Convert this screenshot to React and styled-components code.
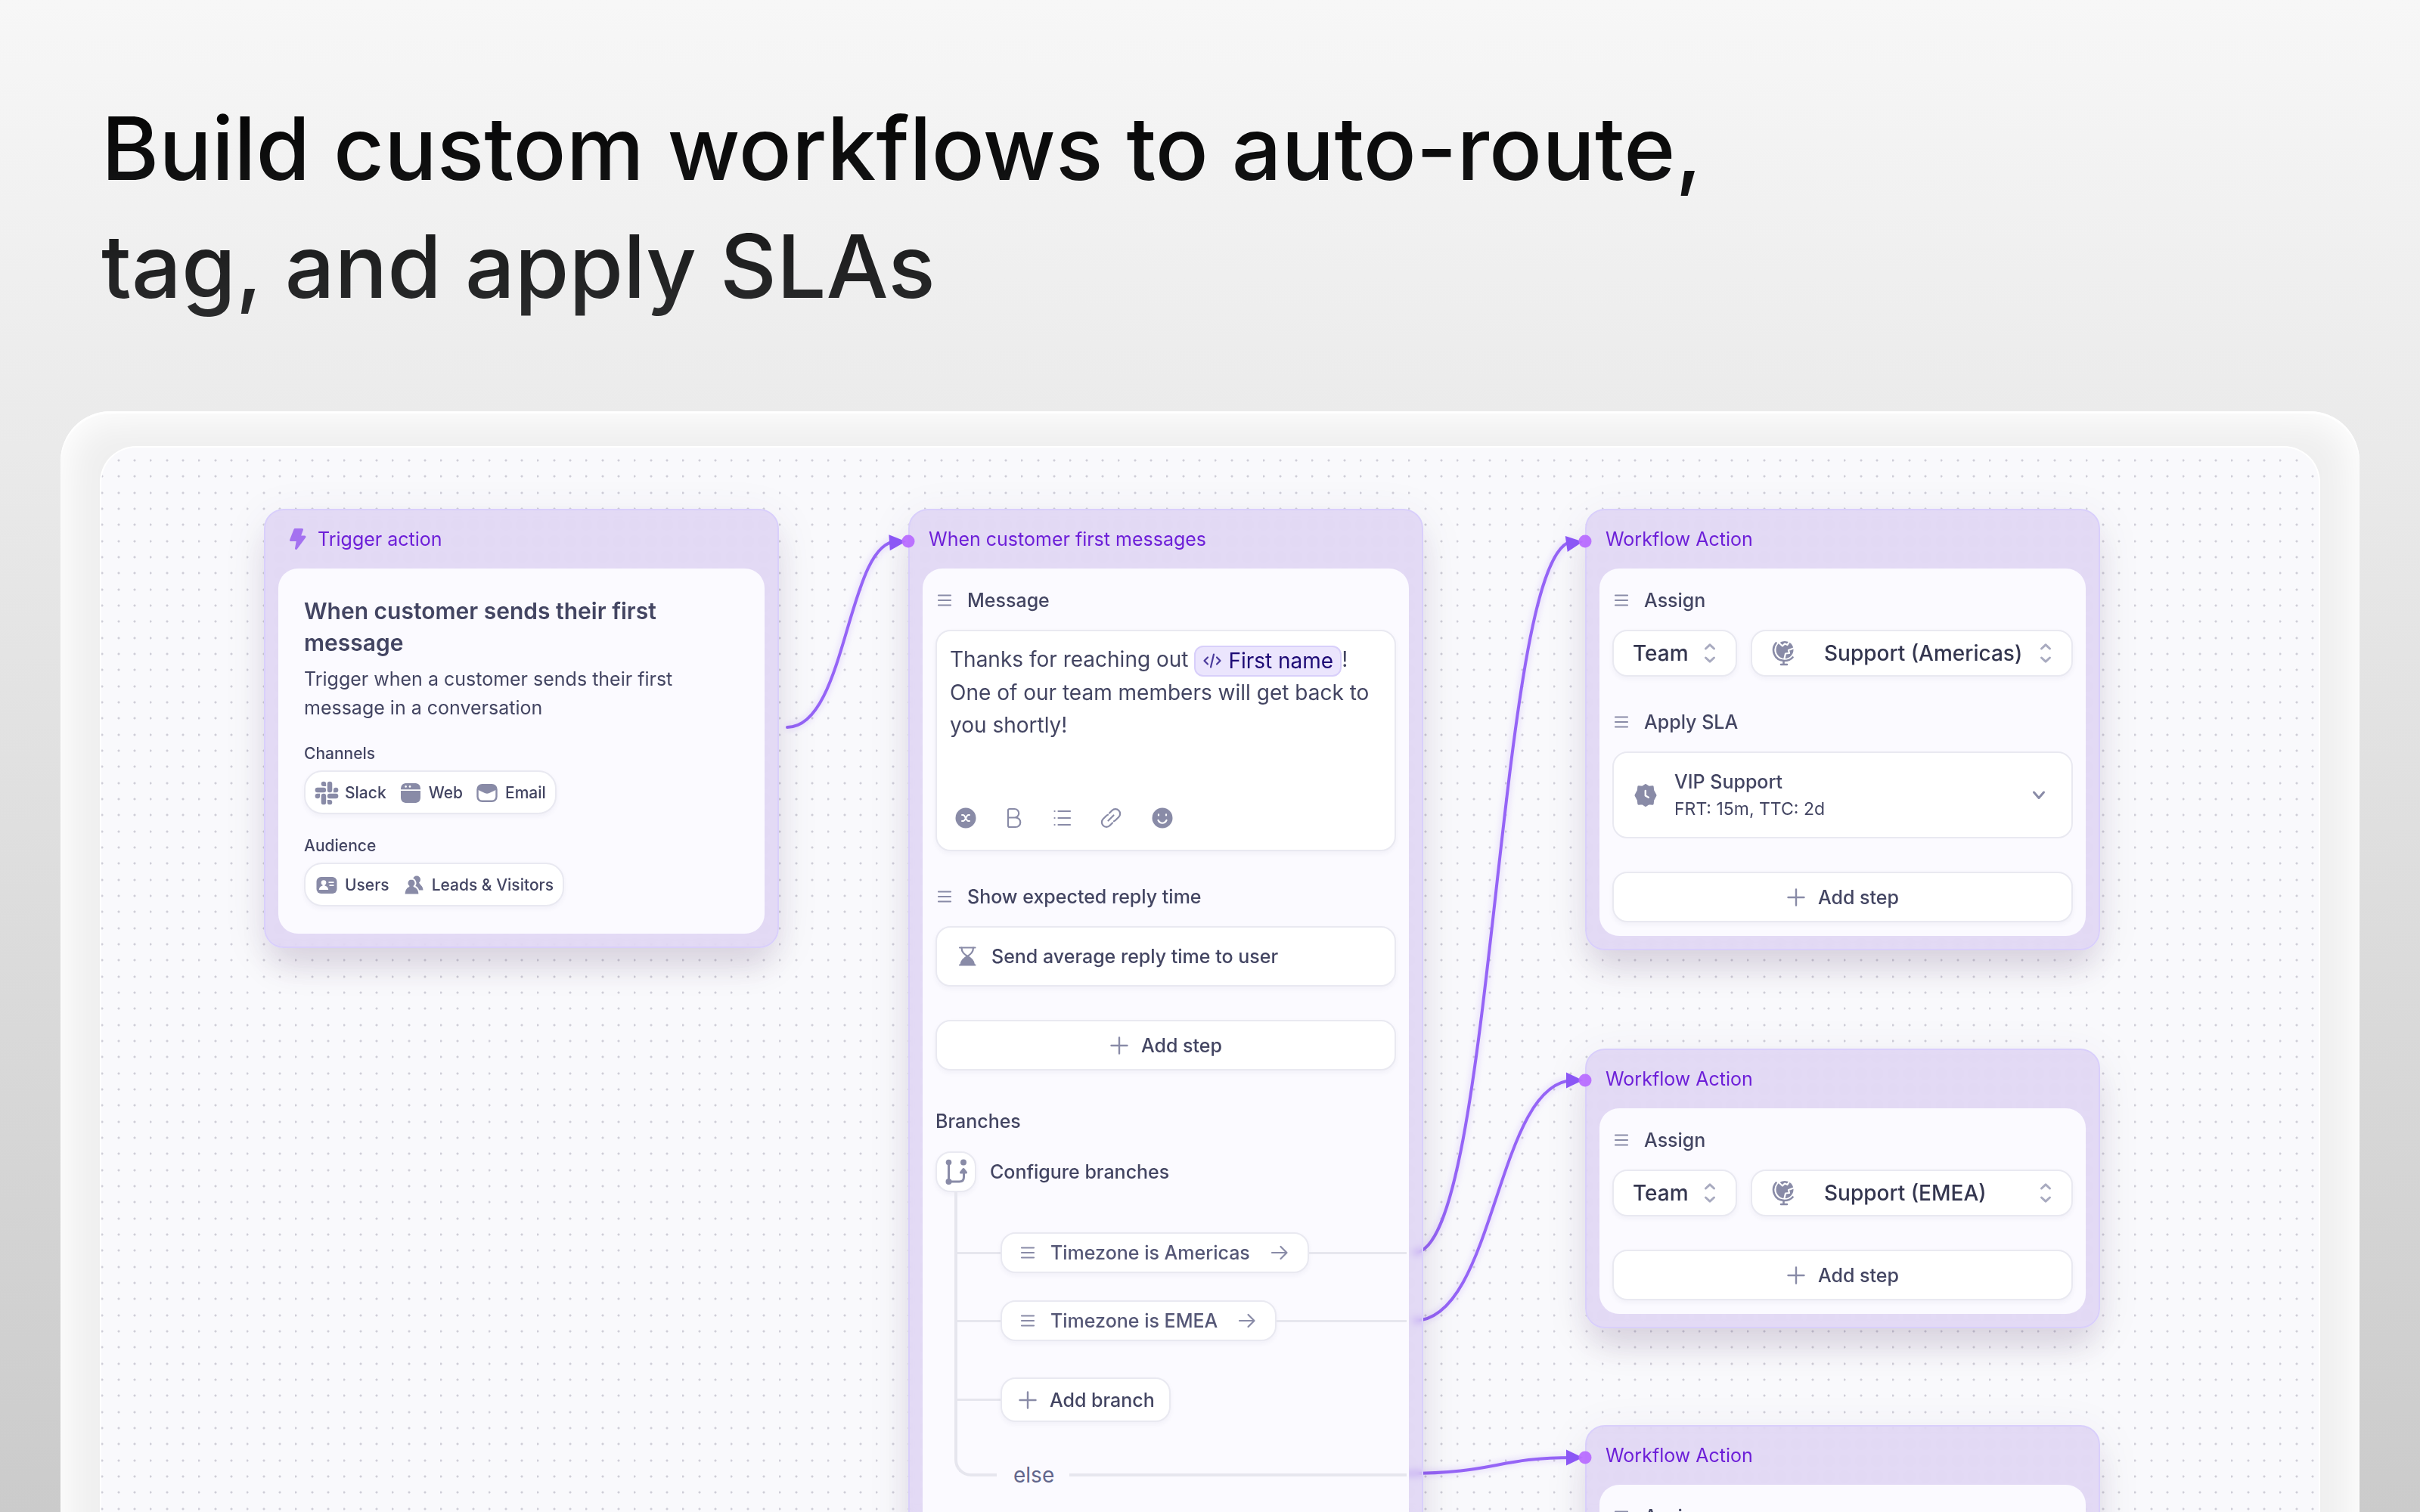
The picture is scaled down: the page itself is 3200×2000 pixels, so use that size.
import React, { useState } from "react";
import styled, { createGlobalStyle } from "styled-components";

const inkColor = "#434562";
const strongColor = "#34364f";
const iconColor = "#898ba7";
const lineColor = "#e6e6ee";
const purpleColor = "#6d1fd8";
const connectorColor = "#9564f6";

// nine dots per 64px tile
const dotPattern = [17, 38, 60]
  .map((y) =>
    [1, 23, 44]
      .map(
        (x) =>
          `radial-gradient(circle at ${x}px ${y}px, #cfced8 1px, transparent 2px)`
      )
      .join(", ")
  )
  .join(", ");

const GlobalStyle = createGlobalStyle`
  * {
    box-sizing: border-box;
  }

  body {
    margin: 0;
    font-family: Inter, "Liberation Sans", sans-serif;
    color: ${inkColor};
    -webkit-font-smoothing: antialiased;
  }

  h1, h2, h3, p {
    margin: 0;
  }

  button, select {
    font-family: inherit;
    color: inherit;
    cursor: pointer;
  }
`;

const Page = styled.main`
  display: flex;
  flex-direction: column;
  height: 100vh;
  overflow: hidden;
  background: linear-gradient(#f7f7f7, #cbcbcb);
`;

const Title = styled.h1`
  max-width: 2400px;
  padding: 118px 134px 114px;
  font-size: 116px;
  line-height: 156px;
  font-weight: 500;
  background: linear-gradient(#000 20%, #2c2d2e 80%);
  background-clip: text;
  color: transparent;
`;

const Frame = styled.section`
  flex: 1;
  display: flex;
  margin: 0 80px -80px;
  padding: 46px 52px 0;
  border-radius: 66px 66px 0 0;
  background: #efefef;
  box-shadow: inset 0 3px 2px #fff, inset 0 0 50px 12px #fff;
`;

const Canvas = styled.div`
  position: relative;
  flex: 1;
  overflow: hidden;
  border: 2px solid #fff;
  border-bottom: none;
  border-radius: 48px 48px 0 0;
  background-color: #f9f9fc;
  background-image: ${dotPattern};
  background-size: 64px 64px;
`;

const Connectors = styled.svg`
  position: absolute;
  top: 0;
  left: 0;
  width: 100%;
  height: 100%;
  filter: drop-shadow(0 0 5px rgba(149, 100, 246, 0.35));
`;

const Ports = styled(Connectors)`
  filter: none;
  pointer-events: none;
`;

const Node = styled.article`
  position: absolute;
  left: ${(props) => props.$x}px;
  top: ${(props) => props.$y}px;
  width: 681px;
  padding: 0 17px 17px;
  border: 2px solid #d9cffb;
  border-radius: 26px;
  background: rgba(211, 197, 240, 0.6);
  backdrop-filter: blur(5px);
  box-shadow: 0 30px 44px -8px rgba(74, 40, 90, 0.15),
    0 12px 60px rgba(74, 60, 110, 0.08);
`;

const NodeHeader = styled.header`
  display: flex;
  align-items: center;
  gap: 14px;
  height: 77px;
  padding: 0 8px 2px;
  line-height: 32px;
  color: ${purpleColor};

  h2 {
    font-size: 25px;
    font-weight: 400;
  }
`;

const NodeBody = styled.div`
  padding: ${(props) => (props.$wide ? "35px 34px 36px" : "18px 17px")};
  border-radius: 26px;
  background: #fbfaff;
`;

const TriggerTitle = styled.h3`
  font-size: 30px;
  line-height: 42px;
  font-weight: 600;
`;

const TriggerText = styled.p`
  margin-top: 8px;
  font-size: 25px;
  line-height: 38px;
`;

const GroupLabel = styled.p`
  margin: 29px 0 9px;
  font-size: 21px;
  line-height: 26px;
  font-weight: 500;
`;

const Surface = `
  border: 2px solid #e9e9f1;
  background: #fff;
  box-shadow: 0 3px 6px rgba(60, 60, 110, 0.05);
`;

const TagGroup = styled.div`
  ${Surface}
  display: flex;
  align-items: center;
  gap: 16px;
  width: fit-content;
  height: 58px;
  padding: 2px 12px 0;
  border-radius: 24px;
`;

const Tag = styled.span`
  display: flex;
  align-items: center;
  gap: 8px;
  font-size: 21px;
  line-height: 26px;
  font-weight: 500;
`;

const StepHeader = styled.h3`
  display: flex;
  align-items: center;
  gap: 18px;
  height: 48px;
  margin-bottom: 15px;
  font-size: 25px;
  font-weight: 500;
`;

const Step = styled.section`
  & + & {
    margin-top: 36px;
  }
`;

const Editor = styled.div`
  ${Surface}
  height: 293px;
  display: flex;
  flex-direction: column;
  justify-content: space-between;
  padding: 16px 17px 28px;
  border-radius: 20px;
`;

const EditorText = styled.div`
  font-size: 28px;
  line-height: 43px;
  outline: none;
`;

const Variable = styled.span`
  display: inline-flex;
  align-items: center;
  gap: 8px;
  height: 41px;
  padding: 0 9px;
  border: 2px solid #d8cffa;
  border-radius: 12px;
  background: #ebe5fd;
  color: #1d0a75;
  line-height: 37px;
  vertical-align: middle;
`;

const Toolbar = styled.div`
  display: flex;
  gap: 36px;
  padding-left: 7px;
`;

const ToolButton = styled.button`
  display: flex;
  padding: 0;
  border: none;
  background: none;
`;

const ReplyBox = styled.div`
  ${Surface}
  display: flex;
  align-items: center;
  gap: 16px;
  height: 80px;
  padding: 0 24px;
  border-radius: 20px;
  font-size: 25px;
  font-weight: 500;
`;

const AddStep = styled.button`
  ${Surface}
  display: flex;
  align-items: center;
  justify-content: center;
  gap: 16px;
  width: 100%;
  height: 67px;
  margin-top: 44px;
  border-radius: 20px;
  font-size: 25px;
  font-weight: 500;
`;

const BranchesTitle = styled.h3`
  margin: 47px 0 20px;
  font-size: 25px;
  line-height: 40px;
  font-weight: 500;
`;

const ConfigureRow = styled.div`
  display: flex;
  align-items: center;
  gap: 18px;
  font-size: 25px;
  font-weight: 500;
`;

const BranchIcon = styled.span`
  ${Surface}
  display: flex;
  align-items: center;
  justify-content: center;
  width: 54px;
  height: 54px;
  border-radius: 20px;
`;

const BranchTree = styled.div`
  position: relative;
  display: flex;
  flex-direction: column;
  margin: 0 -14px 70px 25px;
  padding: 53px 0 68px;
  border: solid ${lineColor};
  border-width: 0 0 4px 4px;
  border-radius: 0 0 0 22px;
`;

const BranchRow = styled.div`
  display: flex;
  align-items: center;
  margin-bottom: ${(props) => props.$gap}px;
`;

const Stub = styled.span`
  width: 57px;
  height: 3px;
  background: ${lineColor};
`;

const Wire = styled(Stub)`
  flex: 1;
`;

const BranchButton = styled.button`
  ${Surface}
  display: flex;
  align-items: center;
  gap: ${(props) => (props.$add ? 16 : 18)}px;
  height: ${(props) => (props.$add ? 59 : 54)}px;
  padding: 0 ${(props) => (props.$add ? "19px 0 21px" : "24px 0 22px")};
  border-radius: 20px;
  font-size: 25px;
  font-weight: 500;
  color: ${(props) => (props.$add ? inkColor : "#555776")};
`;

const ElseLabel = styled.span`
  position: absolute;
  left: 52px;
  bottom: -22px;
  padding: 0 20px 0 22px;
  background: #fbfaff;
  font-size: 28px;
  line-height: 40px;
  color: #62668c;
`;

const SelectRow = styled.div`
  display: flex;
  gap: 18px;
`;

const SelectBox = styled.label`
  ${Surface}
  display: flex;
  flex: ${(props) => (props.$grow ? 1 : "none")};
  width: ${(props) => (props.$grow ? "auto" : "165px")};
  min-width: 0;
  align-items: center;
  gap: 8px;
  height: 62px;
  padding: 0 26px 0 25px;
  border-radius: 20px;

  svg {
    flex: none;
  }
`;

const Select = styled.select`
  appearance: none;
  flex: 1;
  min-width: 0;
  padding: 0 0 0 ${(props) => (props.$inset ? 30 : 0)}px;
  border: none;
  background: transparent;
  font-size: 28px;
  line-height: 40px;
  font-weight: 500;
  color: ${strongColor};
  outline: none;
`;

const SlaButton = styled.button`
  border: 2px solid #e9e9f1;
  background: #fff;
  display: flex;
  align-items: center;
  gap: 22px;
  width: 100%;
  height: 115px;
  padding: 0 34px 0 26px;
  border-radius: 20px;
  text-align: left;
`;

const SlaText = styled.span`
  flex: 1;
  display: flex;
  flex-direction: column;
  font-size: 23px;
  line-height: 36px;

  strong {
    font-size: 25px;
    font-weight: 500;
  }
`;

const Icon = ({ w = 28, h = 28, children, ...rest }) => (
  <svg
    width={w}
    height={h}
    viewBox={`0 0 ${w} ${h}`}
    fill="none"
    stroke={iconColor}
    strokeWidth="2.4"
    strokeLinecap="round"
    strokeLinejoin="round"
    aria-hidden="true"
    {...rest}
  >
    {children}
  </svg>
);

const solid = { fill: iconColor, stroke: "none" };

const BoltIcon = () => (
  <Icon w={30} h={30} fill="#a472f0" stroke="#a472f0" strokeWidth="3">
    <path d="M14 2.500h9.500l-3.500 9.500h7L15.500 27.500l2-11H8.500z" />
  </Icon>
);

const SlackIcon = () => (
  <svg width="32" height="32" viewBox="-0.500 -0.500 25 25" fill={iconColor} aria-hidden="true">
    <path d="M5.042 15.165a2.528 2.528 0 0 1-2.52 2.523A2.528 2.528 0 0 1 0 15.165a2.527 2.527 0 0 1 2.522-2.52h2.52v2.52zM6.313 15.165a2.527 2.527 0 0 1 2.521-2.52 2.527 2.527 0 0 1 2.521 2.52v6.313A2.528 2.528 0 0 1 8.834 24a2.528 2.528 0 0 1-2.521-2.522v-6.313zM8.834 5.042a2.528 2.528 0 0 1-2.521-2.52A2.528 2.528 0 0 1 8.834 0a2.528 2.528 0 0 1 2.521 2.522v2.52H8.834zM8.834 6.313a2.528 2.528 0 0 1 2.521 2.521 2.528 2.528 0 0 1-2.521 2.521H2.522A2.528 2.528 0 0 1 0 8.834a2.528 2.528 0 0 1 2.522-2.521h6.312zM18.956 8.834a2.528 2.528 0 0 1 2.522-2.521A2.528 2.528 0 0 1 24 8.834a2.528 2.528 0 0 1-2.522 2.521h-2.522V8.834zM17.688 8.834a2.528 2.528 0 0 1-2.523 2.521 2.527 2.527 0 0 1-2.52-2.521V2.522A2.527 2.527 0 0 1 15.165 0a2.528 2.528 0 0 1 2.523 2.522v6.312zM15.165 18.956a2.528 2.528 0 0 1 2.523 2.522A2.528 2.528 0 0 1 15.165 24a2.527 2.527 0 0 1-2.52-2.522v-2.522h2.52zM15.165 17.688a2.527 2.527 0 0 1-2.52-2.523 2.526 2.526 0 0 1 2.52-2.52h6.313A2.527 2.527 0 0 1 24 15.165a2.528 2.528 0 0 1-2.522 2.523h-6.313z" />
  </svg>
);

const WebIcon = () => (
  <Icon w={32} h={32} {...solid}>
    <path d="M3 11.300C3 5.500 5.500 3 11 3h10c5.500 0 8 2.500 8 8.300z" />
    <path d="M3 13h26v8.500c0 5-2.500 7.500-8 7.500H11c-5.500 0-8-2.500-8-7.500z" />
    <circle cx="9.600" cy="7.400" r="1.300" fill="#fff" />
    <circle cx="15" cy="7.400" r="1.300" fill="#fff" />
  </Icon>
);

const EmailIcon = () => (
  <Icon w={32} h={32}>
    <rect x="3.500" y="5.200" width="25" height="21.600" rx="6" />
    <path
      d="M3.500 11.500c0-4 2-6.300 6-6.300h13c4 0 6 2.300 6 6.300l-9.500 4.500c-2 1-4 1-6 0z"
      fill={iconColor}
      stroke="none"
    />
  </Icon>
);

const UsersIcon = () => (
  <Icon w={32} h={32} {...solid}>
    <rect x="2.500" y="5" width="27" height="22" rx="6" />
    <g fill="#fff">
      <circle cx="12" cy="12.500" r="3.300" />
      <path d="M10.600 14h2.800v2.500c3 .7 4.600 2.500 4.800 5.500H5.800c.2-3 1.800-4.800 4.800-5.500z" />
      <path d="M18.500 11.300h7v1.700h-7zM19.500 15.200h6v1.700h-6z" />
    </g>
  </Icon>
);

const LeadsIcon = () => (
  <Icon w={32} h={32} {...solid}>
    <circle cx="20" cy="8.500" r="5" />
    <path d="M19 12h4c.3 3 5.500 4.500 5.500 10.500H17z" />
    <path
      d="M13 7.500a5.500 5.500 0 0 1 3.500 9.700c4.500 1.300 6.800 5 7 11.300H3.500c.2-6 2.500-10 6-11.300A5.500 5.500 0 0 1 13 7.500z"
      stroke="#fff"
      strokeWidth="2"
    />
  </Icon>
);

const DragIcon = () => (
  <Icon w={24} h={24} strokeWidth="2.200">
    <path d="M4 5.500h16M4 12h16M4 18.500h16" />
  </Icon>
);

const PlusIcon = () => (
  <Icon w={26} h={26}>
    <path d="M13 2.500v21M2.500 13h21" />
  </Icon>
);

const ArrowIcon = () => (
  <Icon w={34} h={26} strokeWidth="2.200">
    <path d="M11 13h19M22.500 5l8 8-8 8" />
  </Icon>
);

const CodeIcon = () => (
  <Icon w={26} h={24} stroke="#4a3a9c" strokeWidth="2.200">
    <path d="M7 7.500L2.500 12 7 16.500M19 7.500l4.500 4.500-4.500 4.500M15 3.500l-4 17" />
  </Icon>
);

const ClearIcon = () => (
  <Icon>
    <circle cx="14" cy="14" r="13.500" {...solid} />
    <path
      d="M9 10h1.500c3 0 3.500 8 7 8H19M19 10h-1.500c-3 0-3.500 8-7 8H9"
      stroke="#fff"
      strokeWidth="2"
    />
  </Icon>
);

const BoldIcon = () => (
  <Icon strokeWidth="2.200">
    <path d="M6 13.500V4c0-1.300.7-2 2-2h6.500a5.700 5.700 0 0 1 0 11.500zM6 13.500V24c0 1.300.7 2 2 2h8a6.200 6.200 0 0 0 0-12.500" />
  </Icon>
);

const ListIcon = () => (
  <Icon strokeWidth="2.200">
    <path d="M8.500 5H24M8.500 14H24M8.500 23H24M3.500 5h.1M3.500 14h.1M3.500 23h.1" />
  </Icon>
);

const LinkIcon = () => (
  <Icon strokeWidth="2.200">
    <path d="M10.500 17.500l7-7" />
    <path d="M12 7.500l3.500-3.500a6.200 6.200 0 0 1 8.800 8.800L20 17c-.6.600-1.300 1-2 1.300" />
    <path d="M16 20.500L12.500 24a6.200 6.200 0 0 1-8.800-8.800L8 11c.6-.6 1.300-1 2-1.300" />
  </Icon>
);

const SmileIcon = () => (
  <Icon w={36} h={28}>
    <circle cx="18" cy="14" r="13.500" {...solid} />
    <path d="M13 9.300v1.200M23 9.300v1.200M12.500 17c2.500 5 8.500 5 11 0" stroke="#fff" strokeWidth="2.200" />
  </Icon>
);

const HourglassIcon = () => (
  <Icon w={32} h={32} strokeWidth="2.200">
    <path d="M6 4.500h20.500M6 27.500h20.500" />
    <path d="M8.500 4.500c0 6 3.500 8.500 7.800 11.500 4.200-3 7.700-5.500 7.700-11.500" />
    <path d="M7.500 27c.5-6 4-8.500 8.800-11 4.700 2.500 8.200 5 8.700 11z" fill={iconColor} />
  </Icon>
);

const ForkIcon = () => (
  <Icon w={32} h={40} strokeWidth="3">
    <path d="M6.500 8v24M6.500 33h14c4 0 6-2 6-6v-5" />
    <circle cx="6.500" cy="7.500" r="3.800" {...solid} />
    <circle cx="6.500" cy="33" r="4" {...solid} />
    <circle cx="26" cy="7.500" r="4" {...solid} />
    <path d="M22.500 21l3.500-4.500 3.500 4.500z" fill={iconColor} />
  </Icon>
);

const GlobeIcon = () => (
  <Icon w={32} h={34} strokeWidth="2.600">
    <circle cx="18" cy="12.500" r="11.500" {...solid} />
    <path d="M6.500 3.500C-.5 12 3.500 26.500 17.500 27c4.500 0 8.500-1.500 11-4.500M16.500 27v4M13 32h8" />
    <path
      d="M10.500 3.500l4.500 4 3-3 3.500 1.500 2.500-4M17.500 24l1.500-6.500 5-.5-1-4 8-3"
      stroke="#fff"
      strokeWidth="2.200"
    />
  </Icon>
);

const BadgeClockIcon = () => (
  <Icon w={32} h={32}>
    <path
      d="M16 2.500l4.200 2.800 5-.5.500 5 3.300 6.200-3.300 6.200-.5 5-5-.5L16 29.500l-4.200-2.800-5 .5-.5-5L3 16l3.300-6.200.5-5 5 .5z"
      fill={iconColor}
      strokeWidth="3"
    />
    <path d="M15.800 10v6.500l4 2.300" stroke="#fff" strokeWidth="2.400" />
  </Icon>
);

const UpDownIcon = () => (
  <Icon w={16} h={28} stroke="#a9abc0" strokeWidth="3">
    <path d="M2.500 8L8 2.800 13.500 8M2.500 20L8 25.200 13.500 20" />
  </Icon>
);

const ChevronIcon = () => (
  <Icon w={18} h={14} strokeWidth="3">
    <path d="M2.500 3L9 10.500 15.500 3" />
  </Icon>
);

const connectors = [
  "M907 370C986 370 986 124 1052 124",
  "M1736 1065C1844 1065 1844 124 1947 124",
  "M1736 1155C1844 1155 1844 837 1947 837",
  "M1725 1357C1844 1357 1844 1336 1947 1336",
];

const ports = [
  { x: 1067, y: 124, turn: -4 },
  { x: 1962, y: 124, turn: -8 },
  { x: 1962, y: 837, turn: 0 },
  { x: 1962, y: 1336, turn: 0 },
];

const DropDown = ({ label, options, icon }) => {
  const [value, setValue] = useState(options[0]);

  return (
    <SelectBox $grow={Boolean(icon)}>
      {icon}
      <Select
        $inset={Boolean(icon)}
        aria-label={label}
        value={value}
        onChange={(e) => setValue(e.target.value)}
      >
        {options.map((option) => (
          <option key={option}>{option}</option>
        ))}
      </Select>
      <UpDownIcon />
    </SelectBox>
  );
};

const AddStepButton = () => (
  <AddStep type="button">
    <PlusIcon />
    Add step
  </AddStep>
);

const ActionNode = ({ x, y, team, sla }) => (
  <Node $x={x} $y={y}>
    <NodeHeader>
      <h2>Workflow Action</h2>
    </NodeHeader>
    <NodeBody>
      <Step>
        <StepHeader>
          <DragIcon />
          Assign
        </StepHeader>
        <SelectRow>
          <DropDown label="Assignee type" options={["Team"]} />
          <DropDown label="Assignee" options={[team]} icon={<GlobeIcon />} />
        </SelectRow>
      </Step>
      {sla && (
        <Step>
          <StepHeader>
            <DragIcon />
            Apply SLA
          </StepHeader>
          <SlaButton type="button" aria-haspopup="listbox">
            <BadgeClockIcon />
            <SlaText>
              <strong>{sla.name}</strong>
              {sla.targets}
            </SlaText>
            <ChevronIcon />
          </SlaButton>
        </Step>
      )}
      <AddStepButton />
    </NodeBody>
  </Node>
);

const TriggerNode = () => (
  <Node $x={215} $y={81}>
    <NodeHeader>
      <BoltIcon />
      <h2>Trigger action</h2>
    </NodeHeader>
    <NodeBody $wide>
      <TriggerTitle>When customer sends their first message</TriggerTitle>
      <TriggerText>
        Trigger when a customer sends their first message in a conversation
      </TriggerText>
      <GroupLabel>Channels</GroupLabel>
      <TagGroup>
        <Tag>
          <SlackIcon />
          Slack
        </Tag>
        <Tag>
          <WebIcon />
          Web
        </Tag>
        <Tag>
          <EmailIcon />
          Email
        </Tag>
      </TagGroup>
      <GroupLabel>Audience</GroupLabel>
      <TagGroup>
        <Tag>
          <UsersIcon />
          Users
        </Tag>
        <Tag>
          <LeadsIcon />
          Leads &amp; Visitors
        </Tag>
      </TagGroup>
    </NodeBody>
  </Node>
);

const MessageNode = () => (
  <Node $x={1067} $y={81}>
    <NodeHeader>
      <h2>When customer first messages</h2>
    </NodeHeader>
    <NodeBody>
      <Step>
        <StepHeader>
          <DragIcon />
          Message
        </StepHeader>
        <Editor>
          <EditorText
            role="textbox"
            aria-label="Message"
            contentEditable
            suppressContentEditableWarning
            spellCheck={false}
          >
            Thanks for reaching out{" "}
            <Variable contentEditable={false}>
              <CodeIcon />
              First name
            </Variable>
            !<br />
            One of our team members will get back to you shortly!
          </EditorText>
          <Toolbar>
            <ToolButton type="button" aria-label="Insert variable">
              <ClearIcon />
            </ToolButton>
            <ToolButton type="button" aria-label="Bold">
              <BoldIcon />
            </ToolButton>
            <ToolButton type="button" aria-label="List">
              <ListIcon />
            </ToolButton>
            <ToolButton type="button" aria-label="Link">
              <LinkIcon />
            </ToolButton>
            <ToolButton type="button" aria-label="Emoji">
              <SmileIcon />
            </ToolButton>
          </Toolbar>
        </Editor>
      </Step>
      <Step>
        <StepHeader>
          <DragIcon />
          Show expected reply time
        </StepHeader>
        <ReplyBox>
          <HourglassIcon />
          Send average reply time to user
        </ReplyBox>
      </Step>
      <AddStepButton />
      <BranchesTitle>Branches</BranchesTitle>
      <ConfigureRow>
        <BranchIcon>
          <ForkIcon />
        </BranchIcon>
        Configure branches
      </ConfigureRow>
      <BranchTree>
        <BranchRow $gap={36}>
          <Stub />
          <BranchButton type="button">
            <DragIcon />
            Timezone is Americas
            <ArrowIcon />
          </BranchButton>
          <Wire />
        </BranchRow>
        <BranchRow $gap={48}>
          <Stub />
          <BranchButton type="button">
            <DragIcon />
            Timezone is EMEA
            <ArrowIcon />
          </BranchButton>
          <Wire />
        </BranchRow>
        <BranchRow $gap={0}>
          <Stub />
          <BranchButton type="button" $add>
            <PlusIcon />
            Add branch
          </BranchButton>
        </BranchRow>
        <ElseLabel>else</ElseLabel>
      </BranchTree>
    </NodeBody>
  </Node>
);

const App = () => {
  return (
    <>
      <GlobalStyle />
      <Page>
        <Title>
          Build custom workflows to auto-route,
          <br />
          tag, and apply SLAs
        </Title>
        <Frame>
          <Canvas>
            <Connectors aria-hidden="true">
              {connectors.map((d) => (
                <path
                  key={d}
                  d={d}
                  fill="none"
                  stroke={connectorColor}
                  strokeWidth="4"
                  strokeLinecap="round"
                />
              ))}
            </Connectors>
            <TriggerNode />
            <MessageNode />
            <ActionNode
              x={1962}
              y={81}
              team="Support (Americas)"
              sla={{ name: "VIP Support", targets: "FRT: 15m, TTC: 2d" }}
            />
            <ActionNode x={1962} y={795} team="Support (EMEA)" />
            <ActionNode x={1962} y={1293} team="Support (APAC)" />
            <Ports aria-hidden="true">
              {ports.map(({ x, y, turn }) => (
                <g key={`${x}-${y}`} transform={`translate(${x} ${y})`}>
                  <path
                    d="M-25 -10.500L-3 0L-25 10.500z"
                    fill="#8b57f5"
                    transform={`rotate(${turn})`}
                  />
                  <circle r="8.500" fill="#b86dff" fillOpacity="0.950" />
                </g>
              ))}
            </Ports>
          </Canvas>
        </Frame>
      </Page>
    </>
  );
};

export default App;
